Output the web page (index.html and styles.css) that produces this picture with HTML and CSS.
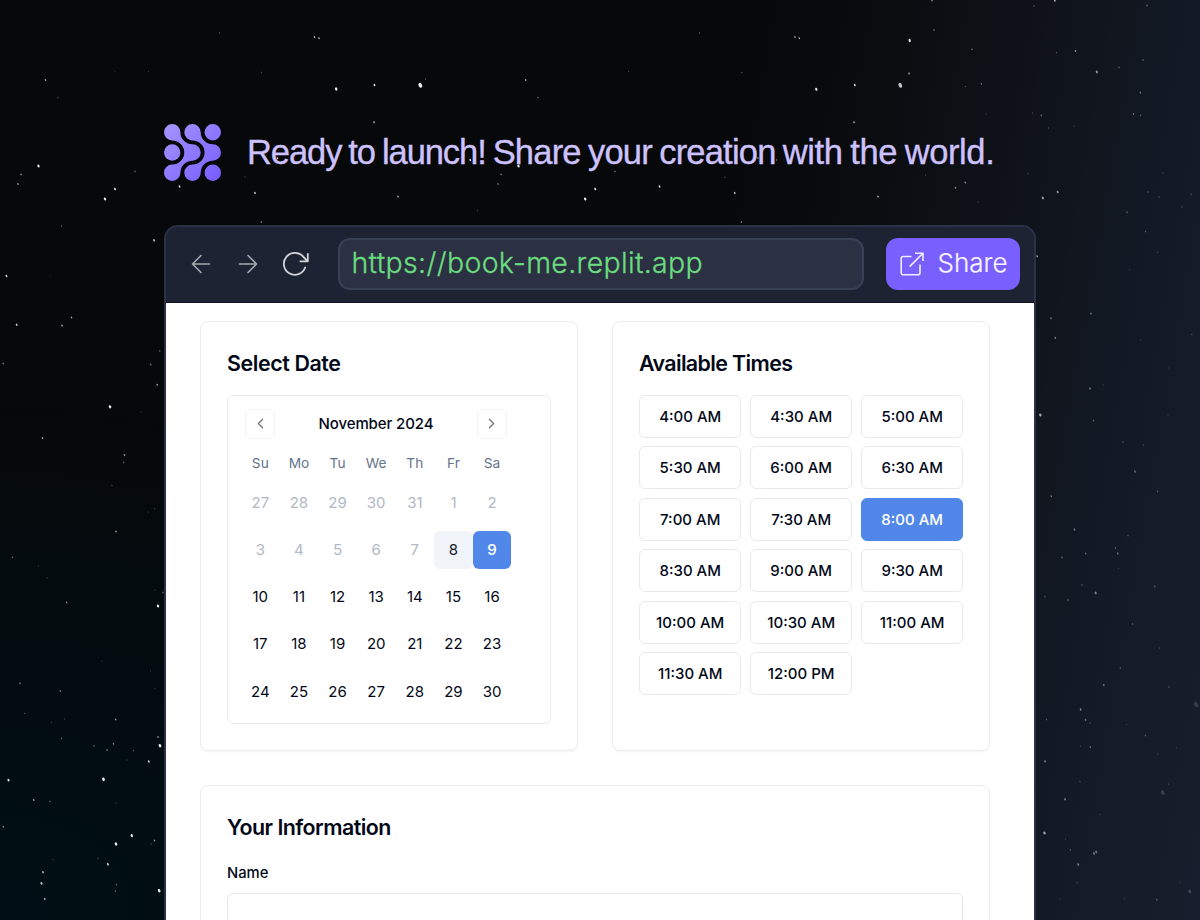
FILE: index.html
```html
<!DOCTYPE html>
<html lang="en">
<head>
<meta charset="utf-8">
<title>Ready to launch</title>
<link rel="stylesheet" href="styles.css">
</head>
<body>
<div class="page">
  <svg class="stars" id="stars" width="1200" height="920" viewBox="0 0 1200 920" aria-hidden="true"></svg>
  <header class="hero">
    <svg class="logo" width="57" height="57" viewBox="0 0 57 57">
      <defs><linearGradient id="violet" gradientUnits="userSpaceOnUse" x1="2" y1="2" x2="54" y2="54"><stop offset="0" stop-color="#a594ff"/><stop offset="1" stop-color="#795eff"/></linearGradient></defs>
      <g fill="url(#violet)">
        <circle cx="48.8" cy="8.2" r="8.2"/><circle cx="8.2" cy="28.5" r="8.2"/><circle cx="48.8" cy="48.8" r="8.2"/>
        <path d="M8.2 16.4A8.2 8.2 0 1 1 16.4 8.2A12.1 12.1 0 0 0 28.5 20.3A8.2 8.2 0 0 1 28.5 36.7A12.1 12.1 0 0 0 16.4 48.8A8.2 8.2 0 1 1 8.2 40.6A12.1 12.1 0 0 0 8.2 16.4Z"/>
        <path d="M28.5 16.4A8.2 8.2 0 1 1 36.7 8.2A12.1 12.1 0 0 0 48.8 20.3A8.2 8.2 0 0 1 48.8 36.7A12.1 12.1 0 0 0 36.7 48.8A8.2 8.2 0 1 1 28.5 40.6A12.1 12.1 0 0 0 28.5 16.4Z"/>
      </g>
    </svg>
    <h1 class="headline"><span class="tight">Ready to launch! </span>Share your creation <span class="loose">with the world.</span></h1>
  </header>
  <main class="window">
    <div class="toolbar">
      <div class="nav">
        <svg width="20" height="20" viewBox="0 0 20 20"><path d="M18.5 10H1.5M10 1.5L1.5 10L10 18.5"/></svg>
        <svg width="20" height="20" viewBox="0 0 20 20"><path d="M1.5 10H18.5M10 1.5L18.5 10L10 18.5"/></svg>
        <svg class="reload" width="28" height="26" viewBox="0 0 28 26"><path d="M23.2 16.5A11 11 0 1 1 21.5 6L25.2 9.8M25.8 3V10.3H18.4"/></svg>
      </div>
      <div class="url"><span>https://book-me.replit.app</span></div>
      <button class="share">
        <svg width="24" height="24" viewBox="0 0 24 24"><path d="M11.5 4.5H3.2A2 2 0 0 0 1.2 6.500V20.800A2 2 0 0 0 3.200 22.800H18A2 2 0 0 0 20 20.800V12.500M15 1.200H23V9M22.800 1.400L9.600 14.600"/></svg>
        <span>Share</span>
      </button>
    </div>
    <div class="content">
      <section class="card">
        <h2>Select Date</h2>
        <div class="calendar">
          <div class="month">
            <button class="step"><svg width="17" height="17" viewBox="0 0 24 24"><path d="M15 18l-6-6 6-6"/></svg></button>
            <span class="month-name">November 2024</span>
            <button class="step"><svg width="17" height="17" viewBox="0 0 24 24"><path d="M9 18l6-6-6-6"/></svg></button>
          </div>
          <div class="days names"><span>Su</span><span>Mo</span><span>Tu</span><span>We</span><span>Th</span><span>Fr</span><span>Sa</span></div>
          <div class="days past"><span>27</span><span>28</span><span>29</span><span>30</span><span>31</span><span>1</span><span>2</span></div>
          <div class="days past"><span>3</span><span>4</span><span>5</span><span>6</span><span>7</span><span class="today">8</span><span class="picked">9</span></div>
          <div class="days"><span>10</span><span>11</span><span>12</span><span>13</span><span>14</span><span>15</span><span>16</span></div>
          <div class="days"><span>17</span><span>18</span><span>19</span><span>20</span><span>21</span><span>22</span><span>23</span></div>
          <div class="days"><span>24</span><span>25</span><span>26</span><span>27</span><span>28</span><span>29</span><span>30</span></div>
        </div>
      </section>
      <section class="card">
        <h2 class="times-title">Available Times</h2>
        <div class="times">
          <button>4:00 AM</button><button>4:30 AM</button><button>5:00 AM</button>
          <button>5:30 AM</button><button>6:00 AM</button><button>6:30 AM</button>
          <button>7:00 AM</button><button>7:30 AM</button><button class="active">8:00 AM</button>
          <button>8:30 AM</button><button>9:00 AM</button><button>9:30 AM</button>
          <button>10:00 AM</button><button>10:30 AM</button><button>11:00 AM</button>
          <button>11:30 AM</button><button>12:00 PM</button>
        </div>
      </section>
      <section class="card info">
        <h2 class="info-title">Your Information</h2>
        <label for="name">Name</label>
        <input id="name" type="text">
      </section>
    </div>
  </main>
</div>
<script src="stars.js"></script>
</body>
</html>
```
FILE: styles.css
```css
* { box-sizing: border-box; }
body { margin: 0; font-family: Inter, "Liberation Sans", sans-serif; overflow: hidden; }
button { font: inherit; padding: 0; color: inherit; }
.page {
  position: relative;
  height: 920px;
  padding: 123px 164px 0;
  overflow: hidden;
  background:
    radial-gradient(ellipse 700px 560px at 0 100%, #000f16 0%, rgba(1, 14, 20, 0) 100%),
    linear-gradient(100deg, #060809 0%, #060809 56%, #0e1117 75%, #131924 87%, #181e2d 100%);
}
.stars { position: absolute; inset: 0; z-index: 1; pointer-events: none; }
.hero { display: flex; align-items: center; gap: 26.5px; height: 59px; margin-bottom: 43px; }
.logo { flex: none; margin-left: -0.5px; }
.headline {
  margin: 0;
  font: 400 34.5px/57px "Liberation Sans", Arial, sans-serif;
  letter-spacing: -0.8px;
  word-spacing: -1.5px;
  color: #cdc2fd;
  -webkit-text-stroke: 0.35px #cdc2fd;
  white-space: nowrap;
}
.tight { letter-spacing: -1.08px; }
.loose { letter-spacing: -0.4px; }
.window {
  position: relative;
  z-index: 2;
  width: 872px;
  height: 720px;
  border: 2px solid #2b3146;
  border-radius: 14px 14px 0 0;
  background: #1d2332;
  overflow: hidden;
}
.toolbar { display: flex; align-items: center; height: 75.5px; padding: 0 14px 1px 25px; background: #1d2332; border-bottom: 1px solid #11141d; }
.nav { display: flex; align-items: center; gap: 27px; width: 146.500px; fill: none; stroke: #a7a9af; stroke-width: 1.600; stroke-linecap: round; stroke-linejoin: round; }
.nav svg { flex: none; }
.nav .reload { margin-left: -3px; stroke: #d0d2d6; stroke-width: 1.800; }
.url {
  width: 526.500px;
  height: 52px;
  margin-right: 22px;
  padding-left: 12px;
  border: 2px solid #384058;
  border-radius: 12px;
  background: #2b3042;
  color: #6bdc80;
  font-size: 28.500px;
  font-weight: 300;
  line-height: 45px;
  letter-spacing: 0.32px;
  -webkit-text-stroke: 0.3px #6bdc80;
}
.share {
  display: flex;
  align-items: center;
  gap: 13.500px;
  width: 134px;
  height: 52px;
  padding-left: 14px;
  border: 0;
  border-radius: 12px;
  background: #7a5fff;
  color: #f7f4ff;
  font-size: 26px;
  font-weight: 300;
}
.share svg { fill: none; stroke: #f0ebff; stroke-width: 1.600; }
.share span { padding-bottom: 2px; -webkit-text-stroke: 0.2px #f7f4ff; }
.content { display: grid; grid-template-columns: 378px 378px; column-gap: 34px; row-gap: 34px; height: 641px; padding: 18px 0 0 34px; background: #fff; }
.card { height: 430.500px; padding: 26px; border: 1.200px solid #ececef; border-radius: 8px; box-shadow: 0 1px 2px rgba(0, 0, 0, .05); }
.card h2 { margin: 0; height: 31px; font-size: 21.400px; line-height: 31px; font-weight: 600; letter-spacing: -0.4px; color: #020817; }
.card .times-title { letter-spacing: -0.62px; }
.card .info-title { letter-spacing: -0.55px; }
.calendar { height: 329.500px; margin-top: 16px; padding: 13px 0 0 13px; border: 1.200px solid #e9ebee; border-radius: 6px; }
.month { display: flex; align-items: center; justify-content: space-between; width: 270px; height: 30px; padding: 0 4px; }
.step { display: grid; place-items: center; width: 30px; height: 30px; border: 1px solid #f2f3f6; border-radius: 6px; background: #fff; }
.step svg { fill: none; stroke: #74767c; stroke-width: 1.800; stroke-linecap: round; stroke-linejoin: round; }
.month-name { font-size: 15px; font-weight: 500; letter-spacing: -0.1px; color: #020817; }
.days { display: grid; grid-template-columns: repeat(7, 38.640px); margin-top: 8.700px; color: #020817; font-size: 15px; line-height: 38.600px; text-align: center; }
.days span { border-radius: 6px; }
.names { margin-top: 14px; line-height: 20px; font-size: 13.700px; color: #64748b; margin-bottom: 11px; }
.past { color: #b1b9c5; }
.days .today { background: #f1f5f9; color: #0f172a; }
.days .picked { background: #5287ea; color: #fff; font-weight: 500; }
.times { display: grid; grid-template-columns: repeat(3, 102.400px); gap: 8.600px; margin-top: 16px; }
.times button { height: 43px; border: 1.200px solid #e6e9ee; border-radius: 6px; background: #fff; color: #020817; font-size: 15px; font-weight: 500; }
.times .active { background: #5287ea; border-color: #5287ea; color: #fff; }
.info { grid-column: 1 / -1; }
.info label { display: block; margin-top: 20px; height: 20px; font-size: 14.800px; line-height: 20px; font-weight: 500; color: #020817; }
.info input { display: block; width: 100%; height: 43px; margin-top: 10px; border: 1.200px solid #e4e8ed; border-radius: 6px; }
```
FILE: stars.js
```js
// Each star: x, y, brightness (0-1), size
const stars = [
  [45.5,80,.7,1.5],[58,97.5,.3,1.3],[115,71.5,.12,1.3],[219.5,33,.3,1.2],[148.500,71.500,.2,1.200],[314.500,37,.8,1.400],[319,38.200,.8,1.400],[336.200,89,1,2.300],[374.500,85,.9,1.800],[261.500,72.500,.25,1.300],
  [38.500,166,1,2.100],[21,174.500,.6,1.400],[18,184,.65,1.400],[115,189,.95,1.800],[105,199,1,2.200],[179.500,186.500,.9,1.700],[135,171.500,.45,1.300],[61.500,226,.35,1.200],[154,240.300,.9,1.700],[6.500,276,.9,1.700],[50,276.500,.1,1.300],
  [255,193,.8,1.600],[245,177,.25,1.200],[261.200,222,.55,1.300],[374,122.300,.8,1.500],[398,196.500,.75,1.500],[277.500,158.300,.9,1.500],
  [420.300,85.300,1,3.500],[425.500,79,.3,1.300],[525.700,80,.75,1.400],[538,97.500,.4,1.300],[628.500,71.500,.25,1.200],[699.700,33,.4,1.200],[795,37,.7,1.400],[799.300,38.300,.7,1.400],[741.800,72.500,.35,1.200],
  [470.300,160,.9,1.700],[518.500,166,1,2.200],[501,174.300,.6,1.300],[498,184,.6,1.300],[595.200,189,.95,1.900],[585.200,199,1,2.200],[659.500,186.500,.9,1.700],[615,171.500,.5,1.300],[734.700,193,.8,1.600],[741.300,222,.55,1.300],[477.500,210.500,.2,1.300],[725,177.300,.3,1.200],[758,158,.6,1.400],[776.500,160,.4,1.300],
  [816.300,89.300,.95,2.200],[854.800,85,.9,1.700],[900.300,85.300,.8,3.500],[909,73.500,.6,1.600],[909.700,40.500,.9,2.300],[934,30,.5,1.300],[932,.6,.65,1.300],[1054.800,.6,.7,1.600],[1034,6,.4,1.200],[1147,5.500,.4,1.400],[972,49.300,.5,1.300],[854,122.300,.8,1.400],[878,196.500,.75,1.500],
  [965.300,86.500,.3,1.200],[981.300,83.800,.55,1.200],[1056.500,52.500,.3,1.200],[1075.500,51,.6,1.500],[1096.800,72,.6,2],[1119,67.500,.4,1.300],[1143,60,.4,1.300],[1140.300,92.500,.45,1.500],[1133.500,114,.4,1.400],[1140.600,115.300,.35,1.300],[1041.300,115.500,.4,1.400],[1032.500,113,.25,1.200],[1048.500,128,.25,1.200],[1074,126,.2,1.200],[986,114,.2,1.200],
  [965.300,182.500,.6,1.400],[955.500,187.800,.6,1.400],[978,202,.25,1.200],[925.500,175,.25,1.200],[1028,173.500,.25,1.200],[1042.800,198,.65,2],[1057.700,192,.6,1.900],[1148,192,.3,1.300],[1159,197,.3,1.200],[1182,207,.3,1.200],[1191,194.500,.3,1.300],[1127,212.300,.35,1.400],[1163,173,.2,1.200],[1145.500,231.500,.3,1.300],[1157.500,252.500,.2,1.200],[1037.200,256.300,.6,1.600],[1129.500,269.500,.15,1.200],
  [16.700,324.800,.85,1.700],[62,325.500,.75,1.500],[71.500,317.500,.65,1.400],[3.200,363.500,.55,1.300],[159.800,351,.4,1.300],[150.700,364.500,.5,1.400],[157.200,384.800,.65,1.500],[110,406.800,1,2.300],[42.500,438,.7,1.500],[124.500,455,.65,1.500],[123.700,462.500,.35,1.300],[112,485.500,.3,1.200],[116,531.500,.65,1.500],[154.700,508.500,.25,1.200],[148.500,512,.2,1.200],[12.500,557.300,.4,1.300],[38.500,566,.2,1.200],[47,578,.25,1.200],[162.800,592.500,.4,1.300],[66.700,602.500,.55,1.500],[158,606,1,2.200],[155,590,.2,1.200],[141,412,.2,1.200],
  [20,683.300,.5,1.400],[60.300,691,.5,1.400],[24.600,713.500,.3,1.200],[51.500,722.500,.2,1.200],[64.500,719,.2,1.200],[61.500,738.300,.4,1.300],[115.700,719.500,.65,1.400],[94,745.800,.4,1.300],[107,750,.5,1.400],[113.500,743.700,.55,1.400],[133.500,750.500,.3,1.200],[127,760,.2,1.200],[158,737,.6,1.500],[160,745.700,1,2.500],[148.800,761.500,.85,1.800],[103.500,779.300,1,2.600],[8.500,780.200,.9,2],[33.700,800,.7,1.500],[50,801.500,.4,1.300],[116,803,.2,1.200],[3.300,826.800,.5,1.500],[131.800,835.600,1,2.200],[116,844,1,2.400],[154.500,840.500,.6,1.500],[151,844,.25,1.300],[98,858.300,.3,1.200],[108,864.300,.8,1.900],[43,872.200,.75,1.700],[41.500,883.300,.8,2],[44.800,899,.65,1.700],[116.500,884.500,.4,1.300],[115.300,891,.4,1.300],[159.200,890.700,1,2.500],[53,859.500,.2,1.200],[102,661,.2,1.200],[155,688.500,.2,1.200],[150.500,671,.2,1.200],
  [1051,318.300,.5,1.400],[1091,313.500,.5,1.500],[1055.300,337.800,.5,1.600],[1191.800,334.500,.25,1.200],[1140.500,340,.15,1.200],[1169,368,.15,1.200],[1090,388.500,.45,1.600],[1103,385,.2,1.200],[1040.300,415,.7,2.200],[1093.500,420.500,.35,1.400],[1168,415,.15,1.200],[1123,442,.3,1.300],[1143.500,445,.25,1.200],[1135,471.500,.35,1.900],[1157.500,491.500,.3,1.300],[1051.300,496.300,.45,1.500],[1074.500,529.500,.45,1.600],[1128,535.500,.3,1.300],[1115.500,548,.3,1.400],[1117.800,553.500,.4,1.600],[1085.700,553.500,.4,1.400],[1062,557.500,.4,1.400],[1118.500,568.500,.15,1.200],[1082,585,.3,1.300],[1095.700,593,.5,2],[1154.800,586.500,.25,1.600],[1045,596.500,.3,1.300],[1068,600,.35,1.400],
  [1132.500,624,.3,1.300],[1159.500,648,.2,1.200],[1120.300,668,.3,1.400],[1103.800,685,.4,1.600],[1169,687,.25,1.300],[1196.200,704.500,.15,4],[1080.600,709.500,.55,1.600],[1085.500,719.800,.4,1.600],[1090,723,.25,1.200],[1046.500,719.500,.3,1.300],[1126.500,724.500,.15,1.200],[1145.300,735.500,.3,1.300],[1080.500,746,.2,1.200],[1090.300,747,.4,1.400],[1045,761.300,.5,1.600],[1157.700,754,.2,1.200],[1176.500,747.500,.15,1.200],[1168.500,784,.2,1.200],[1162.700,792.500,.18,3.300],[1080,781.500,.3,1.200],[1065,799.300,.5,1.700],[1100,814.500,.2,1.200],[1044.500,833,.65,2.200],[1065.500,839,.2,1.200],[1070.500,850,.3,1.300],[1094,853.500,.4,2],[1096.200,852,.4,2],[1078.200,864.500,.5,1.700],[1077,882.500,.2,1.200],[1189.800,891.500,.2,2.700],[1156.800,899.800,.3,1.500],[1124.500,899,.15,1.200],[1060,899,.15,1.200],[1180,882.500,.15,1.200]
];
const field = document.getElementById("stars");
for (const [x, y, a, s] of stars) {
  const star = document.createElementNS("http://www.w3.org/2000/svg", "ellipse");
  star.setAttribute("cx", x);
  star.setAttribute("cy", y);
  star.setAttribute("rx", s * 0.5);
  star.setAttribute("ry", s * 0.72);
  star.setAttribute("transform", `rotate(-22 ${x} ${y})`);
  star.setAttribute("fill", `rgba(235, 242, 250, ${a})`);
  field.appendChild(star);
}
```
